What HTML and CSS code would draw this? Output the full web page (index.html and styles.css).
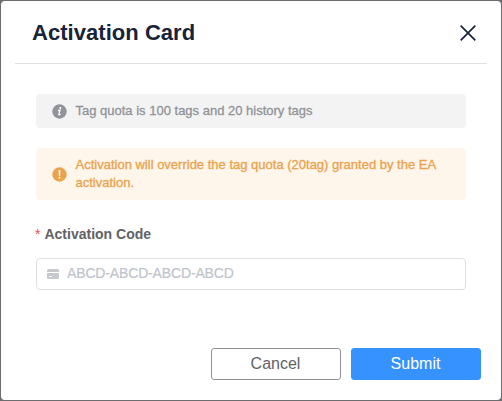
FILE: index.html
```html
<!DOCTYPE html>
<html lang="en">
<head>
  <meta charset="UTF-8">
  <meta name="viewport" content="width=device-width, initial-scale=1.0">
  <title>Activation Card</title>
  <link rel="stylesheet" href="styles.css">
</head>
<body>
  <div class="dialog" role="dialog" aria-labelledby="dialogTitle">
    <div class="dialog-header">
      <h1 class="dialog-title" id="dialogTitle">Activation Card</h1>
      <button class="dialog-close" type="button" aria-label="Close">
        <svg width="16" height="16" viewBox="0 0 16 16">
          <path d="M0.7 0.7L15.3 15.3M15.3 0.7L0.7 15.3" fill="none" stroke="currentColor" stroke-width="1.7"/>
        </svg>
      </button>
    </div>

    <div class="dialog-body">
      <div class="alert alert-info">
        <svg class="alert-icon" width="15" height="15" viewBox="0 0 15 15">
          <circle cx="7.5" cy="7.5" r="7.2" fill="currentColor"/>
          <circle cx="8.3" cy="4" r="1.05" fill="#fff"/>
          <path d="M6 6.7L8 6.2L6.9 10.4Q6.8 11.3 8.6 10.2" fill="none" stroke="#fff" stroke-width="1.3"/>
        </svg>
        <p class="alert-text">Tag quota is 100 tags and 20 history tags</p>
      </div>

      <div class="alert alert-warning">
        <svg class="alert-icon" width="15" height="15" viewBox="0 0 15 15">
          <circle cx="7.5" cy="7.5" r="7.2" fill="currentColor"/>
          <path d="M6.5 3.2H8.5L8.1 8.9H6.9Z" fill="#fff"/>
          <circle cx="7.5" cy="10.8" r="0.95" fill="#fff"/>
        </svg>
        <p class="alert-text">Activation will override the tag quota (20tag) granted by the EA activation.</p>
      </div>

      <label class="form-label" for="code"><span class="required">*</span>Activation Code</label>
      <div class="input-box">
        <svg class="input-icon" width="12" height="10" viewBox="0 0 12 10">
          <path d="M1.5 0H10.5Q12 0 12 1.5V3H0V1.5Q0 0 1.5 0Z" fill="currentColor"/>
          <path d="M0 4H12V8.5Q12 10 10.5 10H1.5Q0 10 0 8.5Z" fill="currentColor"/>
          <path d="M2 7.5H5" stroke="#fff" stroke-width="1"/>
        </svg>
        <input class="input" id="code" type="text" placeholder="ABCD-ABCD-ABCD-ABCD">
      </div>
    </div>

    <div class="dialog-footer">
      <button class="btn" type="button">Cancel</button>
      <button class="btn btn-primary" type="button">Submit</button>
    </div>
  </div>
</body>
</html>
```
FILE: styles.css
```css
* {
  margin: 0;
  padding: 0;
  box-sizing: border-box;
}

body {
  height: 401px;
  padding: 1px;
  background-color: #6d6d70;
  font-family: "Liberation Sans", Arial, sans-serif;
  overflow: hidden;
}

.dialog {
  display: flex;
  flex-direction: column;
  width: 500px;
  height: 399px;
  background-color: #fff;
  border-radius: 4px;
}

.dialog-header {
  display: flex;
  justify-content: space-between;
  align-items: center;
  height: 63px;
  margin: 0 14px;
  padding: 2px 11px 0 17px;
  border-bottom: 1px solid #e0e1e2;
}

.dialog-title {
  font-size: 22px;
  line-height: 26px;
  letter-spacing: 0.04px;
  color: #172338;
}

.dialog-close {
  display: flex;
  border: none;
  background: none;
  color: #172338;
  cursor: pointer;
}

.dialog-body {
  display: flex;
  flex-direction: column;
  padding: 30px 35px 0;
}

.alert {
  display: flex;
  align-items: center;
  gap: 8.5px;
  margin-bottom: 20px;
  padding: 8px 16px;
  border-radius: 4px;
}

.alert-icon {
  flex: none;
}

.alert-text {
  font-size: 13px;
  line-height: 18px;
  -webkit-text-stroke: 0.3px currentColor;
}

.alert-info {
  background-color: #f3f3f3;
  color: #909399;
}

.alert-warning {
  background-color: #fef5eb;
  color: #eca24a;
}

.form-label {
  height: 38px;
  padding-top: 6px;
  font-size: 14px;
  font-weight: bold;
  line-height: 16px;
  color: #606266;
}

.required {
  margin-right: 4px;
  margin-left: -1px;
  font-weight: normal;
  font-size: 14px;
  color: #f24b4b;
}

.input-box {
  display: flex;
  align-items: center;
  gap: 8px;
  height: 32px;
  padding: 0 10px;
  border: 1px solid #dedfe2;
  border-radius: 4px;
}

.input-icon {
  flex: none;
  margin-bottom: 1px;
  color: #c6c8ce;
}

.input {
  flex: 1;
  height: 100%;
  padding-bottom: 2px;
  border: none;
  outline: none;
  font-family: inherit;
  font-size: 14px;
  letter-spacing: -0.15px;
}

.input::placeholder {
  color: #c0c4cc;
  -webkit-text-stroke: 0.2px currentColor;
}

.dialog-footer {
  display: flex;
  justify-content: flex-end;
  gap: 10px;
  margin-top: auto;
  padding: 0 20px 20px;
}

.btn {
  width: 130px;
  height: 32px;
  padding-right: 1px;
  border: 1px solid #929294;
  border-radius: 3px;
  background-color: #fff;
  font-family: inherit;
  font-size: 16px;
  color: #606266;
  cursor: pointer;
}

.btn-primary {
  border-color: #3692fe;
  background-color: #3692fe;
  color: #fff;
}
```
